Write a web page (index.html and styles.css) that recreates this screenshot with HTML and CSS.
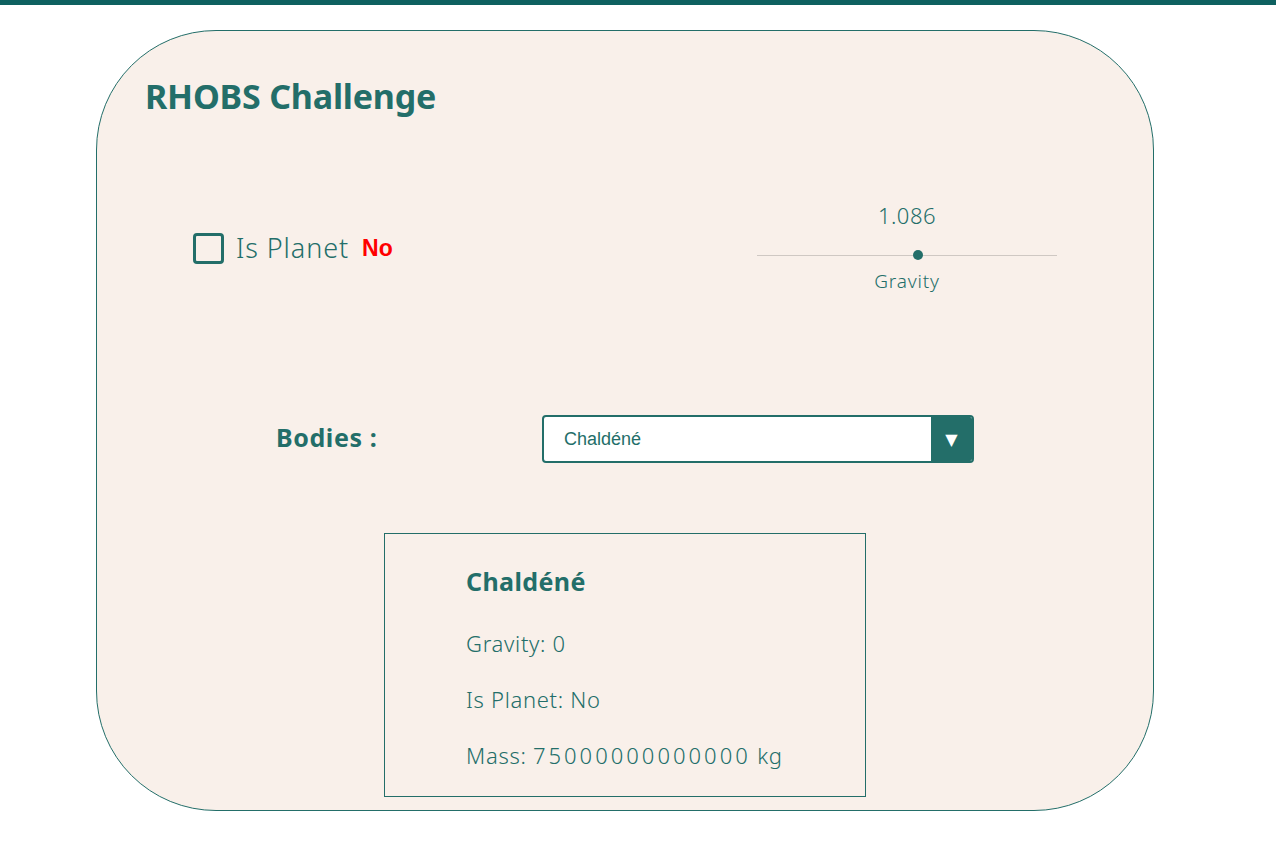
FILE: index.html
```html
<!DOCTYPE html>
<html lang="en">
<head>
<meta charset="utf-8">
<title>RHOBS Challenge</title>
<link rel="stylesheet" href="styles.css">
</head>
<body>
<div class="topbar"></div>
<main class="card">
  <h1 class="title">RHOBS Challenge</h1>
  <div class="controls">
    <label class="planet">
      <span class="checkbox"></span>
      <span class="planet-text">Is Planet</span>
      <span class="planet-value">No</span>
    </label>
    <div class="slider">
      <div class="slider-value">1.086</div>
      <div class="slider-track"><span class="slider-thumb"></span></div>
      <div class="slider-label">Gravity</div>
    </div>
  </div>
  <div class="bodies">
    <div class="bodies-label">Bodies :</div>
    <div class="select">
      <span class="select-text">Chaldéné</span>
      <span class="select-arrow">▼</span>
    </div>
  </div>
  <section class="info">
    <h2 class="info-title">Chaldéné</h2>
    <p class="info-line">Gravity: <span class="num">0</span></p>
    <p class="info-line">Is Planet: No</p>
    <p class="info-line">Mass: <span class="num">75000000000000</span> kg</p>
  </section>
</main>
</body>
</html>
```

FILE: styles.css
```css
* { box-sizing: border-box; }
html, body { margin: 0; padding: 0; background: #ffffff; }
body {
  font-family: "Noto Sans", "Open Sans", sans-serif;
  color: #236e69;
}
.topbar {
  height: 5px;
  background: #0e6160;
}
.card {
  margin: 25px 0 0 96px;
  width: 1058px;
  height: 781px;
  border: 1px solid #236e69;
  border-radius: 120px;
  background: #f9f0ea;
  padding-top: 43px;
}
.title {
  margin: 0 0 0 48px;
  font-size: 34px;
  line-height: 44px;
  font-weight: 700;
  letter-spacing: -0.2px;
}
.controls {
  margin-top: 82px;
  padding: 0 96px;
  display: flex;
  justify-content: space-between;
  align-items: center;
}
.planet {
  display: flex;
  align-items: center;
  margin-top: 4px;
}
.checkbox {
  width: 31px;
  height: 31px;
  border: 3px solid #236e69;
  border-radius: 4px;
}
.planet-text {
  margin-left: 12px;
  font-size: 27px;
  font-weight: 300;
  line-height: 36px;
  letter-spacing: 0.9px;
}
.planet-value {
  margin-left: 13px;
  font-family: "Liberation Sans", Arial, sans-serif;
  font-weight: 700;
  font-size: 23px;
  color: #ff0000;
}
.slider {
  width: 300px;
  display: flex;
  flex-direction: column;
  align-items: center;
}
.slider-value {
  font-size: 22px;
  line-height: 30px;
  font-weight: 300;
  letter-spacing: 0.5px;
}
.slider-track {
  margin-top: 20px;
  width: 100%;
  height: 10px;
  display: flex;
  align-items: center;
  justify-content: center;
  background: linear-gradient(#cfc8c3, #cfc8c3) center / 100% 1px no-repeat;
}
.slider-thumb {
  width: 10px;
  height: 10px;
  border-radius: 50%;
  background: #236e69;
  margin-left: 22px;
}
.slider-label {
  margin-top: 10px;
  font-size: 19px;
  line-height: 22px;
  font-weight: 300;
  letter-spacing: 0.8px;
}
.bodies {
  margin-top: 123px;
  padding-left: 179px;
  display: grid;
  grid-template-columns: 266px 432px;
  align-items: center;
}
.bodies-label {
  font-size: 25px;
  font-weight: 700;
  letter-spacing: 0.6px;
  line-height: 30px;
  margin-top: -4px;
}
.select {
  height: 48px;
  display: flex;
  border: 2px solid #236e69;
  border-radius: 4px;
  background: #ffffff;
  overflow: hidden;
}
.select-text {
  flex: 1;
  padding-left: 20px;
  font-family: "Liberation Sans", Arial, sans-serif;
  font-size: 18px;
  line-height: 44px;
}
.select-arrow {
  width: 41px;
  background: #236e69;
  color: #ffffff;
  font-family: "DejaVu Sans", sans-serif;
  font-size: 16px;
  display: flex;
  align-items: center;
  justify-content: center;
}
.info {
  margin: 70px auto 0;
  width: 482px;
  height: 264px;
  border: 1px solid #236e69;
  padding: 31px 0 0 81px;
}
.info-title {
  margin: 0 0 30px;
  font-size: 25px;
  line-height: 32px;
  font-weight: 700;
  letter-spacing: 0.4px;
}
.info-line {
  margin: 0 0 24px;
  font-size: 22px;
  line-height: 32px;
  font-weight: 300;
  letter-spacing: 0.7px;
}
.num {
  letter-spacing: 3px;
}
```
